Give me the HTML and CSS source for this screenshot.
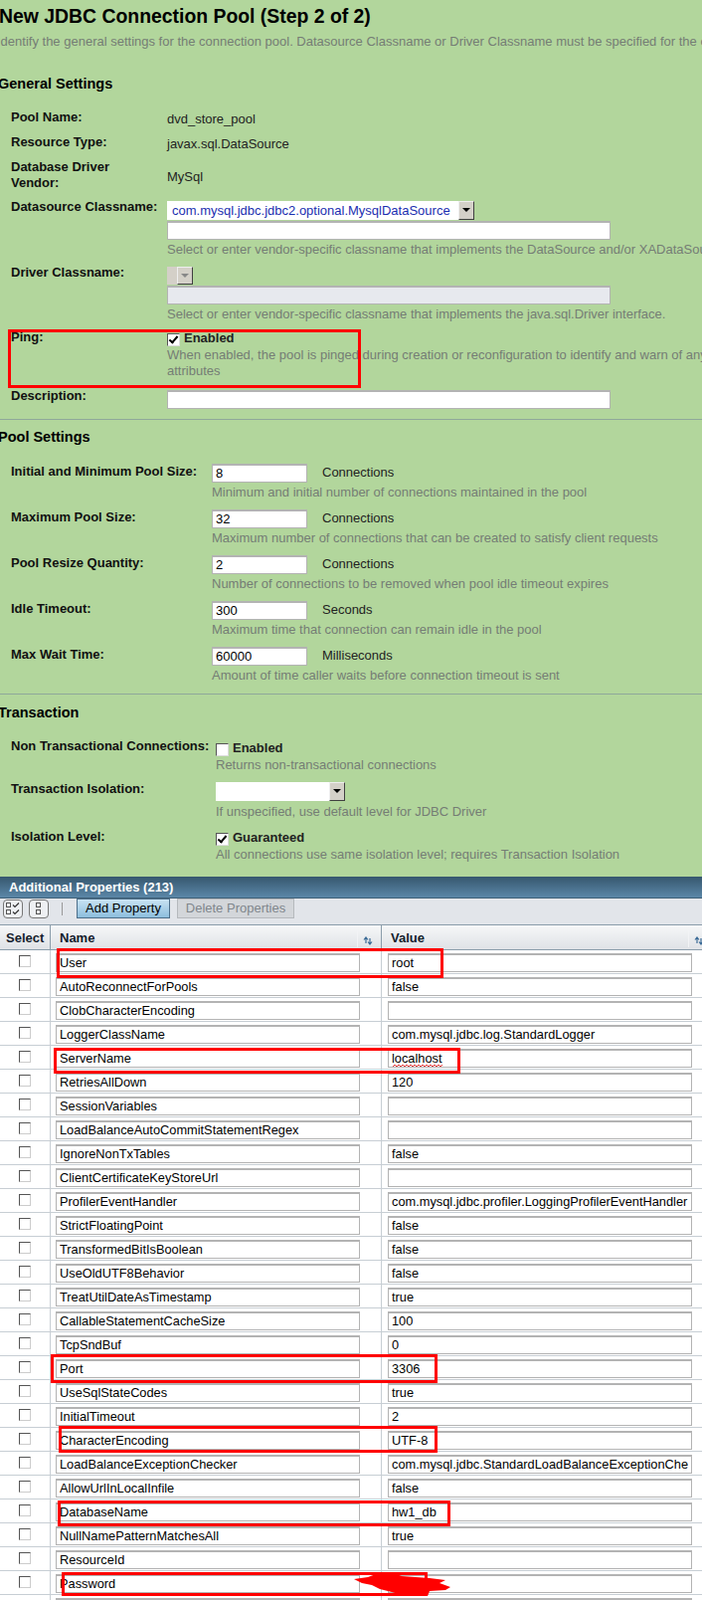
FILE: index.html
```html
<!DOCTYPE html>
<html lang="en">
<head>
    <meta charset="UTF-8">
    <title>New JDBC Connection Pool</title>
    <link rel="stylesheet" href="styles.css">
</head>
<body>
<div class="page">
    <div class="form-area">
        <h1 class="title">New JDBC Connection Pool (Step 2 of 2)</h1>
        <p class="intro">Identify the general settings for the connection pool. Datasource Classname or Driver Classname must be specified for the connection pool.</p>

        <h2 class="section-head general-head">General Settings</h2>
        <div class="rows general-rows">
            <div class="label">Pool Name:</div>
            <div class="value plain">dvd_store_pool</div>
            <div class="label">Resource Type:</div>
            <div class="value plain">javax.sql.DataSource</div>
            <div class="label vendor-label">Database Driver Vendor:</div>
            <div class="value plain vendor-value">MySql</div>
            <div class="label">Datasource Classname:</div>
            <div class="value">
                <div class="fake-select ds-select"><span class="sel-text">com.mysql.jdbc.jdbc2.optional.MysqlDataSource</span><span class="sel-btn"></span></div>
                <input class="text-in wide" type="text">
                <div class="help">Select or enter vendor-specific classname that implements the DataSource and/or XADataSource interface.</div>
            </div>
            <div class="label">Driver Classname:</div>
            <div class="value">
                <div class="fake-select drv-select"><span class="sel-btn off"></span></div>
                <input class="text-in wide off" type="text" disabled>
                <div class="help">Select or enter vendor-specific classname that implements the java.sql.Driver interface.</div>
            </div>
            <div class="label">Ping:</div>
            <div class="value pad3">
                <div class="check-line"><span class="check on"></span><span>Enabled</span></div>
                <div class="help tight">When enabled, the pool is pinged during creation or reconfiguration to identify and warn of any erroneous values<br>attributes</div>
            </div>
            <div class="label">Description:</div>
            <div class="value"><input class="text-in wide" type="text"></div>
        </div>

        <hr class="rule">
        <h2 class="section-head pool-head">Pool Settings</h2>
        <div class="rows pool-rows">
            <div class="label">Initial and Minimum Pool Size:</div>
            <div class="value pad3">
                <div class="num-line"><input class="text-in num" type="text" value="8"><span>Connections</span></div>
                <div class="help">Minimum and initial number of connections maintained in the pool</div>
            </div>
            <div class="label">Maximum Pool Size:</div>
            <div class="value pad3">
                <div class="num-line"><input class="text-in num" type="text" value="32"><span>Connections</span></div>
                <div class="help">Maximum number of connections that can be created to satisfy client requests</div>
            </div>
            <div class="label">Pool Resize Quantity:</div>
            <div class="value pad3">
                <div class="num-line"><input class="text-in num" type="text" value="2"><span>Connections</span></div>
                <div class="help">Number of connections to be removed when pool idle timeout expires</div>
            </div>
            <div class="label">Idle Timeout:</div>
            <div class="value pad3">
                <div class="num-line"><input class="text-in num" type="text" value="300"><span>Seconds</span></div>
                <div class="help">Maximum time that connection can remain idle in the pool</div>
            </div>
            <div class="label">Max Wait Time:</div>
            <div class="value pad3">
                <div class="num-line"><input class="text-in num" type="text" value="60000"><span>Milliseconds</span></div>
                <div class="help">Amount of time caller waits before connection timeout is sent</div>
            </div>
        </div>

        <hr class="rule second-rule">
        <h2 class="section-head">Transaction</h2>
        <div class="rows tx-rows">
            <div class="label">Non Transactional Connections:</div>
            <div class="value">
                <div class="check-line"><span class="check"></span><span>Enabled</span></div>
                <div class="help tight">Returns non-transactional connections</div>
            </div>
            <div class="label">Transaction Isolation:</div>
            <div class="value pad3">
                <div class="fake-select iso-select"><span class="sel-text"></span><span class="sel-btn"></span></div>
                <div class="help iso-help">If unspecified, use default level for JDBC Driver</div>
            </div>
            <div class="label">Isolation Level:</div>
            <div class="value pad3">
                <div class="check-line"><span class="check on"></span><span>Guaranteed</span></div>
                <div class="help tight">All connections use same isolation level; requires Transaction Isolation</div>
            </div>
        </div>
    </div>

    <div class="table-title">Additional Properties (213)</div>
    <div class="toolbar">
        <span class="tool-icon">
            <svg width="18" height="17" viewBox="0 0 18 17"><rect x="2.500" y="2.500" width="4" height="4" fill="none" stroke="#555"/><rect x="2.500" y="9.500" width="4" height="4" fill="none" stroke="#555"/><path d="M9 4.500l2 2 4-4M9 11.500l2 2 4-4" fill="none" stroke="#333" stroke-width="1.200"/></svg>
        </span>
        <span class="tool-icon">
            <svg width="18" height="17" viewBox="0 0 18 17"><rect x="6.500" y="2.500" width="4" height="4" fill="none" stroke="#555"/><rect x="6.500" y="9.500" width="4" height="4" fill="none" stroke="#555"/></svg>
        </span>
        <span class="tool-sep"></span>
        <button class="btn add">Add Property</button>
        <button class="btn del">Delete Properties</button>
    </div>
    <div class="prop-table" id="propTable">
        <div class="head-cell head-select">Select</div>
        <div class="head-cell head-name">Name<svg class="sort" width="10" height="9" viewBox="0 0 10 9"><path d="M3 7V1.500M1 3.500L3 1l2 2.500M7 2v5.500M5 5.500L7 8l2-2.500" fill="none" stroke="#3a6a96" stroke-width="1.200"/></svg></div>
        <div class="head-cell head-value">Value<svg class="sort" width="10" height="9" viewBox="0 0 10 9"><path d="M3 7V1.500M1 3.500L3 1l2 2.500M7 2v5.500M5 5.500L7 8l2-2.500" fill="none" stroke="#3a6a96" stroke-width="1.200"/></svg></div>
    </div>
    <!-- red marks drawn over the screenshot -->
    <div class="mark mark-ping"></div>
    <div class="mark mark-user"></div>
    <div class="mark mark-server"></div>
    <div class="mark mark-port"></div>
    <div class="mark mark-charset"></div>
    <div class="mark mark-db"></div>
    <div class="mark mark-pass"></div>
    <svg class="squiggle" width="52" height="4" viewBox="0 0 52 4"><path d="M0 3l2-2 2 2 2-2 2 2 2-2 2 2 2-2 2 2 2-2 2 2 2-2 2 2 2-2 2 2 2-2 2 2 2-2 2 2 2-2 2 2 2-2 2 2 2-2 2 2 2-2" fill="none" stroke="#e23a3a" stroke-width="1"/></svg>
    <svg class="scribble" width="100" height="26" viewBox="0 0 100 26"><path d="M0 7L14 5L22 2L40 1L48 4L76 6L92 8L86 11L97 15L92 18L76 19L74 24L48 23L38 20L26 17L18 13L8 11Z" fill="#f00"/></svg>
</div>
<script>
    // property rows of the table
    const props = [
        ['User', 'root'], ['AutoReconnectForPools', 'false'], ['ClobCharacterEncoding', ''],
        ['LoggerClassName', 'com.mysql.jdbc.log.StandardLogger'], ['ServerName', 'localhost'],
        ['RetriesAllDown', '120'], ['SessionVariables', ''], ['LoadBalanceAutoCommitStatementRegex', ''],
        ['IgnoreNonTxTables', 'false'], ['ClientCertificateKeyStoreUrl', ''],
        ['ProfilerEventHandler', 'com.mysql.jdbc.profiler.LoggingProfilerEventHandler'],
        ['StrictFloatingPoint', 'false'], ['TransformedBitIsBoolean', 'false'], ['UseOldUTF8Behavior', 'false'],
        ['TreatUtilDateAsTimestamp', 'true'], ['CallableStatementCacheSize', '100'], ['TcpSndBuf', '0'],
        ['Port', '3306'], ['UseSqlStateCodes', 'true'], ['InitialTimeout', '2'], ['CharacterEncoding', 'UTF-8'],
        ['LoadBalanceExceptionChecker', 'com.mysql.jdbc.StandardLoadBalanceExceptionChecker'],
        ['AllowUrlInLocalInfile', 'false'], ['DatabaseName', 'hw1_db'], ['NullNamePatternMatchesAll', 'true'],
        ['ResourceId', ''], ['Password', ''], ['', '']
    ];
    const table = document.getElementById('propTable');
    props.forEach(([name, value]) => {
        const row = document.createElement('div');
        row.className = 'prop-row';
        row.innerHTML = '<div class="cell cell-select"><span class="check row-check"></span></div>' +
            '<div class="cell cell-name"><input class="text-in prop-in" type="text" value="' + name + '"></div>' +
            '<div class="cell cell-value"><input class="text-in prop-in" type="text" value="' + value + '"></div>';
        table.appendChild(row);
    });
</script>
</body>
</html>
```

FILE: styles.css
```css
html, body {
    margin: 0;
    padding: 0;
    height: 1608px;
    overflow: hidden;
}
body {
    font-family: "Liberation Sans", Arial, sans-serif;
    font-size: 13px;
    color: #000;
    background-color: #fff;
}
.page {
    position: relative;
    width: 706px;
    height: 1608px;
    overflow: hidden;
}
.form-area {
    background-color: #b2d69c;
    height: 881px;
    overflow: hidden;
    box-sizing: border-box;
    padding-top: 6px;
}
.title {
    margin: 0 0 0 -1px;
    font-size: 19.400px;
    line-height: 21px;
    font-weight: bold;
    white-space: nowrap;
}
.intro {
    margin: 8px 0 0 -3px;
    line-height: 14px;
    color: #757d75;
    white-space: nowrap;
}
.section-head {
    margin: 10px 0 0 -2px;
    font-size: 14.500px;
    line-height: 16px;
    font-weight: bold;
}
.general-head {
    margin-top: 27px;
}
.pool-head {
    margin-top: 9px;
}
.rows {
    display: grid;
    padding-left: 11px;
    margin-top: 16px;
    align-items: start;
}
.general-rows {
    grid-template-columns: 157px 1fr;
    grid-template-rows: 25px 25px 40px 66px 65px 59px 23px;
}
.pool-rows {
    grid-template-columns: 202px 1fr;
    grid-auto-rows: 46px;
}
.tx-rows {
    grid-template-columns: 206px 1fr;
    grid-template-rows: 43px 48px auto;
}
.label {
    font-weight: bold;
    line-height: 16px;
    color: #111;
    padding-top: 2px;
    white-space: nowrap;
}
.pool-rows .label {
    padding-top: 3px;
}
.value {
    min-width: 0;
    white-space: nowrap;
    padding-top: 4px;
}
.value.pad3 {
    padding-top: 3px;
}
.plain {
    line-height: 16px;
    color: #222;
}
.vendor-label {
    width: 130px;
    white-space: normal;
}
.value.vendor-value {
    padding-top: 12px;
}
.help {
    color: #757d75;
    line-height: 16px;
    margin-top: 2px;
}
.help.tight {
    margin-top: 1px;
}
.help.iso-help {
    margin-top: 3px;
}
.text-in {
    display: block;
    box-sizing: border-box;
    height: 19px;
    padding: 0 3px 1px;
    margin: 0;
    border: 1px solid #b3b3b3;
    border-top-width: 2px;
    background-color: #fff;
    font-family: "Liberation Sans", Arial, sans-serif;
    font-size: 13px;
    color: #000;
    outline: none;
}
.wide {
    width: 446px;
}
.off {
    background-color: #e7e9ee;
}
.fake-select {
    display: flex;
    box-sizing: border-box;
    height: 19px;
    background-color: #fff;
    margin-bottom: 1px;
}
.ds-select {
    width: 309px;
}
.drv-select {
    width: 26px;
    height: 18px;
    background-color: #d4d0c8;
    justify-content: flex-end;
}
.iso-select {
    width: 130px;
}
.sel-text {
    flex: 1;
    color: #1c2fb0;
    line-height: 19px;
    padding-left: 5px;
    overflow: hidden;
}
.sel-btn {
    width: 16px;
    flex: none;
    box-sizing: border-box;
    background-color: #d4d0c8;
    border: 1px solid;
    border-color: #eee #404040 #404040 #eee;
    position: relative;
}
.sel-btn::after {
    content: "";
    position: absolute;
    left: 3px;
    top: 6px;
    border-style: solid;
    border-width: 4px 4px 0;
    border-color: #000 transparent transparent;
}
.sel-btn.off::after {
    border-top-color: #888;
}
.check-line {
    display: flex;
    align-items: flex-start;
    gap: 4px;
    height: 16px;
    line-height: 16px;
    font-weight: bold;
    color: #222;
}
.check {
    display: block;
    box-sizing: border-box;
    width: 13px;
    height: 13px;
    margin-top: 3px;
    flex: none;
    background-color: #fff;
    border: 1px solid;
    border-color: #555 #ddd #ddd #555;
    position: relative;
}
.check.on::after {
    content: "";
    position: absolute;
    left: 3px;
    top: 0;
    width: 3px;
    height: 7px;
    border: solid #000;
    border-width: 0 2px 2px 0;
    transform: rotate(40deg);
}
.num-line {
    display: flex;
    align-items: flex-start;
    gap: 15px;
    line-height: 16px;
    color: #222;
}
.num-line span {
    padding-top: 1px;
}
.num {
    width: 96px;
}
.rule {
    margin: 10px 0 0;
    border: none;
    border-top: 1px solid #8fa89a;
    height: 0;
}
.second-rule {
    margin-top: 4px;
}
.table-title {
    height: 22px;
    box-sizing: border-box;
    padding: 3px 0 0 9px;
    background: linear-gradient(#36576e, #5b87a8);
    border-bottom: 1px solid #3f6077;
    color: #fff;
    font-weight: bold;
    line-height: 15px;
}
.toolbar {
    display: flex;
    align-items: flex-start;
    height: 27px;
    background-color: #e2e5ea;
    border-bottom: 1px solid #8b9dab;
    box-sizing: border-box;
    padding-left: 3px;
}
.tool-icon {
    display: flex;
    align-items: center;
    justify-content: center;
    box-sizing: border-box;
    width: 20px;
    height: 19px;
    margin: 1px 6px 0 0;
    border: 1px solid #777;
    border-radius: 4px;
    background-color: #eef0f3;
}
.tool-sep {
    width: 1px;
    height: 13px;
    background-color: #999;
    margin: 4px 14px 0 7px;
}
.btn {
    box-sizing: border-box;
    height: 20px;
    padding: 0 0 2px;
    font-family: "Liberation Sans", Arial, sans-serif;
    font-size: 13px;
    border: 1px solid #8b9dab;
    margin-right: 7px;
}
.add {
    width: 94px;
    background: linear-gradient(#c9e3f3, #8dbedd);
    border-color: #4d6f8a;
    color: #000;
}
.del {
    width: 118px;
    background-color: #d3d6da;
    border-color: #b5b9bd;
    color: #80868c;
}
.prop-table {
    display: grid;
    grid-template-columns: 51px 333px 1fr;
    background-color: #fff;
}
.head-cell {
    position: relative;
    height: 25px;
    box-sizing: border-box;
    padding: 5px 0 0 9px;
    font-weight: bold;
    line-height: 16px;
    color: #14202c;
    background: linear-gradient(#f6f7f8, #dfe2e6);
    border-bottom: 1px solid #8b9dab;
}
.head-select {
    padding-left: 6px;
    border-right: 1px solid #8b9dab;
}
.head-name {
    border-right: 1px solid #8b9dab;
}
.head-cell::after {
    content: "";
    position: absolute;
    top: 4px;
    bottom: 2px;
    width: 1px;
    background-color: #f2f3f5;
}
.head-select::after {
    display: none;
}
.head-name::after {
    right: 23px;
}
.head-value::after {
    right: 13px;
}
.sort {
    position: absolute;
    right: 8px;
    top: 11px;
}
.head-value .sort {
    right: -2px;
}
.prop-row {
    display: contents;
}
.cell {
    height: 24px;
    box-sizing: border-box;
    border-bottom: 1px solid #c7ced4;
    padding-top: 3px;
}
.cell-select {
    border-right: 1px solid #c7ced4;
    display: flex;
    justify-content: center;
    padding-top: 2px;
}
.row-check {
    width: 12px;
    height: 12px;
    border-color: #555 #ccc #ccc #555;
}
.cell-name {
    border-right: 1px solid #c7ced4;
    padding-left: 5px;
}
.cell-value {
    padding-left: 6px;
}
.prop-in {
    width: 306px;
    font-size: 12.800px;
}
.mark {
    position: absolute;
    box-sizing: border-box;
    border: 3px solid #f00;
}
.mark-ping { left: 8px; top: 331px; width: 355px; height: 59px; }
.mark-user { left: 57px; top: 953px; width: 389px; height: 30px; }
.mark-server { left: 54px; top: 1053px; width: 409px; height: 26px; }
.mark-port { left: 51px; top: 1361px; width: 389px; height: 29px; }
.mark-charset { left: 59px; top: 1433px; width: 381px; height: 27px; }
.mark-db { left: 58px; top: 1508px; width: 395px; height: 26px; }
.mark-pass { left: 62px; top: 1580px; width: 368px; height: 24px; }
.squiggle {
    position: absolute;
    left: 395px;
    top: 1069px;
}
.scribble {
    position: absolute;
    left: 356px;
    top: 1580px;
}
```
